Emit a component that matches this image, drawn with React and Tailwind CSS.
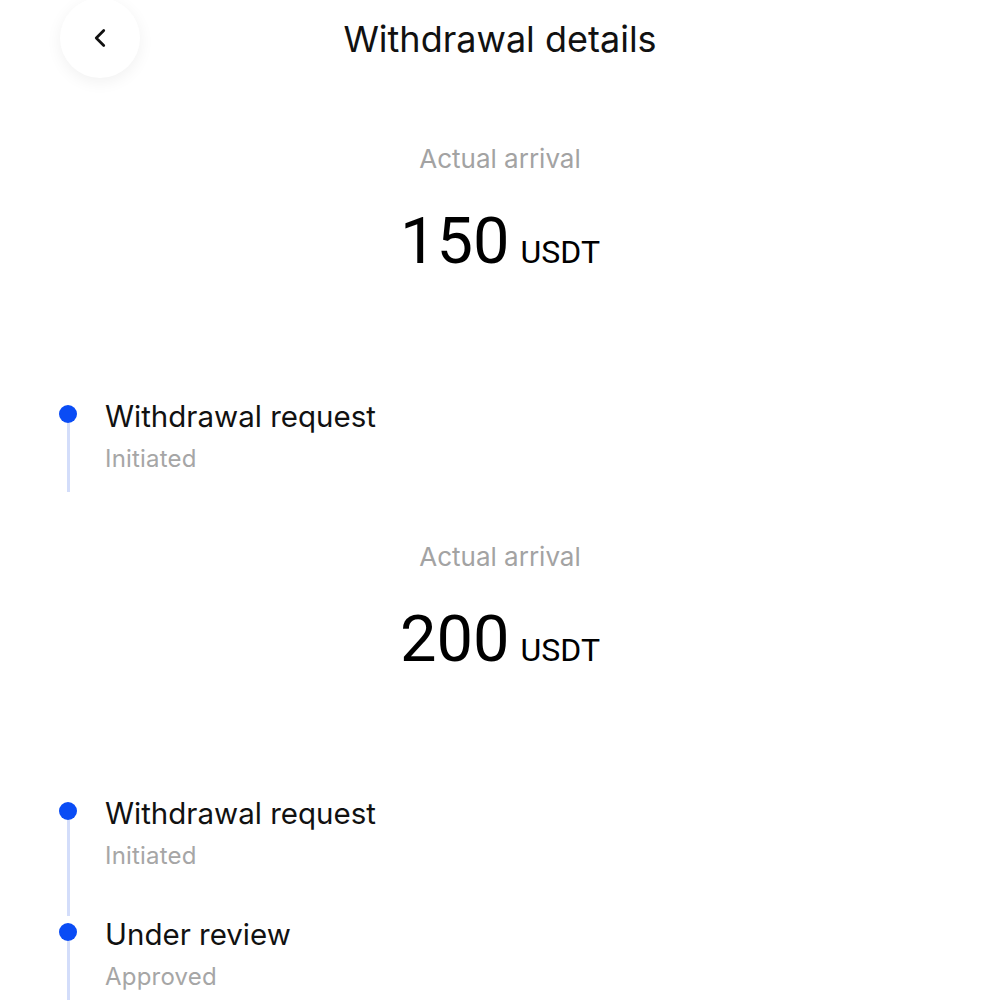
import { ChevronLeft } from "lucide-react";

function Step({ title, status, height }) {
  return (
    <div className="flex" style={{ height }}>
      <div className="ml-[59px] flex w-[18px] flex-col items-center">
        <div className="mt-[7px] h-[18px] w-[18px] shrink-0 rounded-full bg-[#0a4cf5]"></div>
        <div className="w-[3px] flex-1 bg-[#d3ddfa]"></div>
      </div>
      <div className="ml-[28px]">
        <div className="text-[29.5px] leading-[36px] text-[#111]">{title}</div>
        <div className="mt-[10px] text-[24px] leading-[30px] tracking-[0.2px] text-[#a6a6a6]">{status}</div>
      </div>
    </div>
  );
}

function Amount({ value }) {
  return (
    <div className="text-center">
      <div className="text-[26px] leading-[32px] text-[#a3a3a3]">Actual arrival</div>
      <div className="mt-[25px] flex h-[80px] items-baseline justify-center gap-[11px] pt-[7px] font-['Roboto',sans-serif] text-black">
        <span className="text-[65px] leading-[68px]">{value}</span>
        <span className="text-[32px] leading-none">USDT</span>
      </div>
    </div>
  );
}

export default function App() {
  return (
    <div className="h-[1000px] w-[1000px] overflow-hidden bg-white font-['Inter',sans-serif]">
      <header className="relative flex h-[80px] items-center justify-center">
        <button className="absolute left-[60px] top-[-2px] flex h-[80px] w-[80px] items-center justify-center rounded-full bg-white shadow-[0_4px_16px_rgba(0,0,0,0.06)]">
          <ChevronLeft size={30} strokeWidth={2.2} className="text-[#111]" />
        </button>
        <h1 className="-mt-[2px] text-[36px] leading-[40px] text-[#111]">Withdrawal details</h1>
      </header>

      <div className="mt-[63px]">
        <Amount value="150" />
      </div>
      <div className="mt-[118px]">
        <Step title="Withdrawal request" status="Initiated" height={94} />
      </div>

      <div className="mt-[49px]">
        <Amount value="200" />
      </div>
      <div className="mt-[117px]">
        <Step title="Withdrawal request" status="Initiated" height={121} />
        <Step title="Under review" status="Approved" height={121} />
      </div>
    </div>
  );
}
